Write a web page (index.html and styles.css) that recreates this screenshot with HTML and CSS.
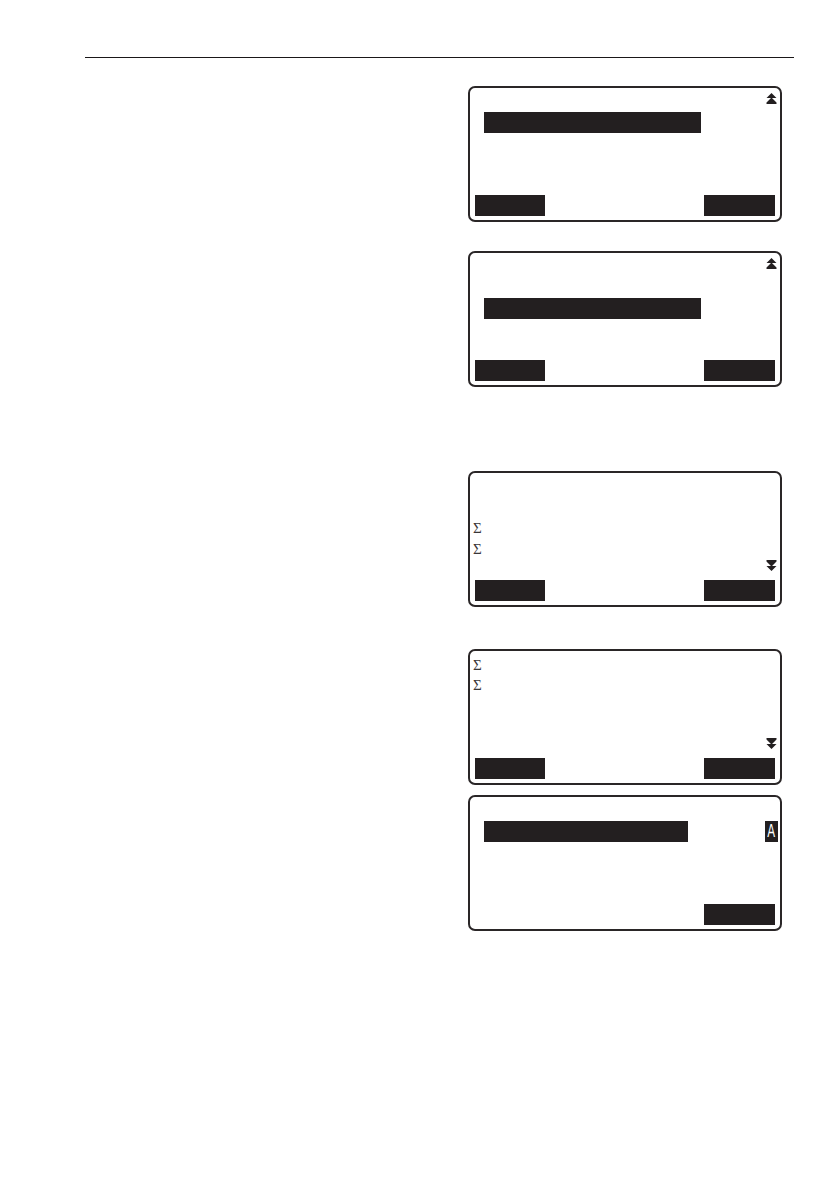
FILE: index.html
```html
<!DOCTYPE html>
<html lang="en">
<head>
<meta charset="utf-8">
<title>Screens</title>
<link rel="stylesheet" href="styles.css">
</head>
<body>
<div class="page">
  <div class="rule"></div>
  <div class="screens">
    <div class="lcd gap-a">
      <div class="row right"><svg class="arrow" viewBox="0 0 11 12"><path d="M5.5 0 L10.5 5 L0.5 5 Z M5.5 4.5 L10.5 9.5 L0.5 9.5 Z M0.5 9.5 H10.5 V11 H0.5 Z"/></svg></div>
      <div class="row"><div class="hl"></div></div>
      <div class="row"></div>
      <div class="row"></div>
      <div class="row"></div>
      <div class="row keys"><div class="key"></div><div class="key wide"></div></div>
    </div>
    <div class="lcd gap-b">
      <div class="row right"><svg class="arrow" viewBox="0 0 11 12"><path d="M5.5 0 L10.5 5 L0.5 5 Z M5.5 4.5 L10.5 9.5 L0.5 9.5 Z M0.5 9.5 H10.5 V11 H0.5 Z"/></svg></div>
      <div class="row"></div>
      <div class="row"><div class="hl"></div></div>
      <div class="row"></div>
      <div class="row"></div>
      <div class="row keys"><div class="key"></div><div class="key wide"></div></div>
    </div>
    <div class="lcd gap-c">
      <div class="row"></div>
      <div class="row"></div>
      <div class="row"><span class="sigma">&Sigma;</span></div>
      <div class="row"><span class="sigma">&Sigma;</span></div>
      <div class="row right"><svg class="arrow down" viewBox="0 0 11 12"><path d="M0.5 0 H10.5 V1.5 H0.5 Z M0.5 1.5 H10.5 L5.5 6.5 Z M0.5 6 H10.5 L5.5 11 Z"/></svg></div>
      <div class="row keys"><div class="key"></div><div class="key wide"></div></div>
    </div>
    <div class="lcd gap-d">
      <div class="row"><span class="sigma">&Sigma;</span></div>
      <div class="row"><span class="sigma">&Sigma;</span></div>
      <div class="row"></div>
      <div class="row"></div>
      <div class="row right"><svg class="arrow down" viewBox="0 0 11 12"><path d="M0.5 0 H10.5 V1.5 H0.5 Z M0.5 1.5 H10.5 L5.5 6.5 Z M0.5 6 H10.5 L5.5 11 Z"/></svg></div>
      <div class="row keys"><div class="key"></div><div class="key wide"></div></div>
    </div>
    <div class="lcd gap-e">
      <div class="row"></div>
      <div class="row split"><div class="hl short"></div><span class="mode"><span class="mode-letter">A</span></span></div>
      <div class="row"></div>
      <div class="row"></div>
      <div class="row"></div>
      <div class="row keys end"><div class="key wide"></div></div>
    </div>
  </div>
</div>
</body>
</html>
```
FILE: styles.css
```css
html, body {
  margin: 0;
  padding: 0;
  background: #ffffff;
}

body {
  width: 840px;
  min-height: 1186px;
  font-family: "Liberation Sans", Arial, sans-serif;
  color: #231f20;
}

.page {
  padding-top: 57px;
}

.rule {
  margin-left: 85px;
  width: 709px;
  border-top: 1.5px solid #1a1718;
}

.screens {
  display: flex;
  flex-direction: column;
  margin-left: 468px;
}

.lcd {
  box-sizing: border-box;
  width: 314px;
  height: 136px;
  border: 2px solid #2a2627;
  border-radius: 7px;
  padding: 4px 5px;
  display: grid;
  grid-template-rows: 20px 21px 21px 21px 20px 21px;
}

.gap-a { margin-top: 28px; }
.gap-b { margin-top: 29px; }
.gap-c { margin-top: 84px; }
.gap-d { margin-top: 42px; }
.gap-e { margin-top: 10px; }

.row {
  display: flex;
  align-items: flex-start;
}

.row.right {
  justify-content: flex-end;
}

.row.keys {
  justify-content: space-between;
}

.row.keys.end {
  justify-content: flex-end;
}

.row.split {
  justify-content: space-between;
}

.arrow {
  width: 11px;
  height: 12px;
  margin-top: 1px;
  margin-right: -2px;
  fill: #231f20;
}

.arrow.down {
  margin-top: 0;
}

.hl {
  margin-left: 9px;
  width: 217px;
  height: 21px;
  background: #231f20;
}

.hl.short {
  width: 204px;
}

.mode {
  display: flex;
  justify-content: center;
  width: 13px;
  height: 21px;
  margin-right: -3px;
  background: #231f20;
}

.mode-letter {
  display: block;
  color: #ffffff;
  font-family: "DejaVu Sans Condensed", "DejaVu Sans", sans-serif;
  font-size: 17px;
  line-height: 21px;
  transform: scaleX(0.75);
}

.sigma {
  margin-left: -2px;
  margin-top: 3px;
  font-family: "Liberation Serif", "Times New Roman", serif;
  font-size: 15px;
  line-height: 14px;
  color: #3a3637;
}

.key {
  width: 70px;
  height: 21px;
  background: #231f20;
}

.key.wide {
  width: 71px;
}
```
